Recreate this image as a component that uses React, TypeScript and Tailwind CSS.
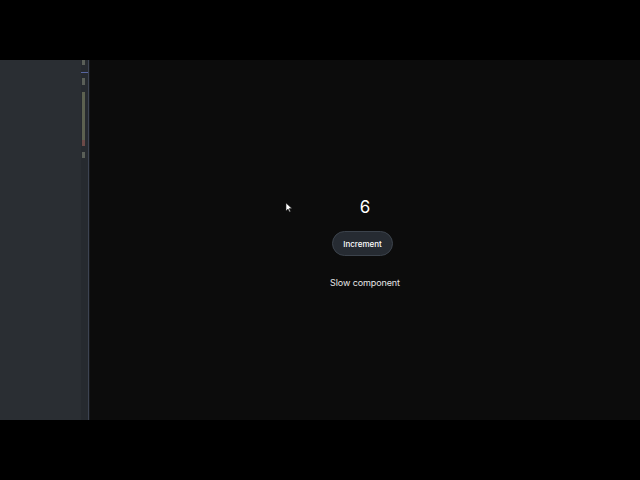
import React, { useState } from 'react';

const markers = [
  { top: 0, h: 5, c: 'bg-[#5a5f58]' },
  { top: 18, h: 7, c: 'bg-[#5a5f58]' },
  { top: 32, h: 48, c: 'bg-[#5c6150]' },
  { top: 80, h: 6, c: 'bg-[#6b4a48]' },
  { top: 92, h: 6, c: 'bg-[#5a5f58]' },
];

export default function App() {
  const [count, setCount] = useState(6);

  return (
    <div className="w-[640px] h-[480px] bg-black flex flex-col" style={{ fontFamily: 'Inter, "Liberation Sans", sans-serif' }}>
      <div className="h-[60px]" />
      <div className="flex h-[360px]">
        {/* editor side panel */}
        <div className="w-[81px] bg-[#2a2e33]" />
        <div className="relative w-[7px] bg-[#262a2f]">
          {markers.map((m, i) => (
            <div key={i} className={`absolute left-[1px] w-[3px] ${m.c}`} style={{ top: m.top, height: m.h }} />
          ))}
          <div className="absolute left-0 top-[12px] w-[7px] h-[1px] bg-[#5866a0]" />
        </div>
        <div className="w-[1px] bg-[#3d4452]" />
        <div className="w-[1px] bg-[#16181b]" />

        {/* preview */}
        <div className="relative flex-1 bg-[#0c0c0c] flex flex-col items-center pt-[135px]">
          <div className="text-[17px] leading-[24px] text-white">{count}</div>
          <button
            onClick={() => setCount(count + 1)}
            className="mt-[12px] h-[25px] w-[61px] rounded-full bg-[#262b32] border border-[#3c434c] text-[8px] font-medium text-white flex items-center justify-center -ml-[5px]"
          >
            Increment
          </button>
          <div className="mt-[20px] text-[9px] tracking-[-0.1px] text-[#e6e6e6]">Slow component</div>

          <svg className="absolute left-[195px] top-[142px]" width="8" height="11" viewBox="0 0 8 11">
            <path d="M1 1 L1 9 L3 7 L4.5 10 L5.5 9.5 L4.2 6.6 L7 6.6 Z" fill="white" stroke="#222" strokeWidth="0.6" />
          </svg>
        </div>
      </div>
      <div className="h-[60px]" />
    </div>
  );
}
